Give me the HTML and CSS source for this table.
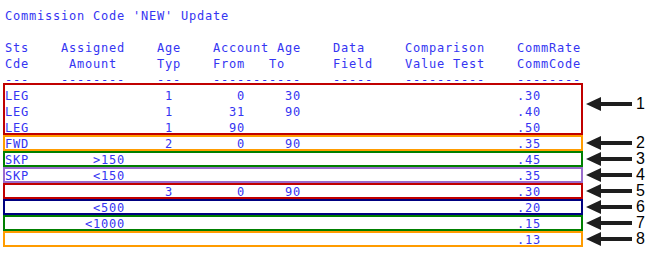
FILE: index.html
```html
<!DOCTYPE html>
<html>
<head>
<meta charset="utf-8">
<link rel="stylesheet" href="styles.css">
</head>
<body>
<div class="screen">
  <div class="line">Commission Code 'NEW' Update</div>
  <div class="line"></div>
  <div class="line cols hdr"><span class="sts">Sts</span><span class="amt">Assigned</span><span class="typ">Age</span><span class="acct">Account Age</span><span class="data">Data</span><span class="cmp">Comparison</span><span class="rate">CommRate</span></div>
  <div class="line cols hdr"><span class="sts">Cde</span><span class="amt">Amount</span><span class="typ">Typ</span><span class="from">From</span><span class="to-h">To</span><span class="data">Field</span><span class="cmp">Value Test</span><span class="rate">CommCode</span></div>
  <div class="line cols hdr"><span class="sts">---</span><span class="amt">--------</span><span class="typ">---</span><span class="acct">-----------</span><span class="data">-----</span><span class="cmp">----------</span><span class="rate">--------</span></div>

  <div class="group first">
    <div class="box red">
      <div class="line cols"><span class="sts">LEG</span><span class="typ">1</span><span class="from">0</span><span class="to">30</span><span class="rate">.30</span></div>
      <div class="line cols"><span class="sts">LEG</span><span class="typ">1</span><span class="from">31</span><span class="to">90</span><span class="rate">.40</span></div>
      <div class="line cols"><span class="sts">LEG</span><span class="typ">1</span><span class="from">90</span><span class="rate">.50</span></div>
    </div>
    <div class="note"><svg class="arrow" width="46" height="14" viewBox="0 0 46 14"><polygon points="0,7 15,0 15,14"/><rect x="14" y="5" width="32" height="4"/></svg><span class="num">1</span></div>
  </div>

  <div class="group">
    <div class="box orange">
      <div class="line cols"><span class="sts">FWD</span><span class="typ">2</span><span class="from">0</span><span class="to">90</span><span class="rate">.35</span></div>
    </div>
    <div class="note"><svg class="arrow" width="46" height="14" viewBox="0 0 46 14"><polygon points="0,7 15,0 15,14"/><rect x="14" y="5" width="32" height="4"/></svg><span class="num">2</span></div>
  </div>

  <div class="group">
    <div class="box green">
      <div class="line cols"><span class="sts">SKP</span><span class="amt">&gt;150</span><span class="rate">.45</span></div>
    </div>
    <div class="note"><svg class="arrow" width="46" height="14" viewBox="0 0 46 14"><polygon points="0,7 15,0 15,14"/><rect x="14" y="5" width="32" height="4"/></svg><span class="num">3</span></div>
  </div>

  <div class="group">
    <div class="box purple">
      <div class="line cols"><span class="sts">SKP</span><span class="amt">&lt;150</span><span class="rate">.35</span></div>
    </div>
    <div class="note"><svg class="arrow" width="46" height="14" viewBox="0 0 46 14"><polygon points="0,7 15,0 15,14"/><rect x="14" y="5" width="32" height="4"/></svg><span class="num">4</span></div>
  </div>

  <div class="group">
    <div class="box red">
      <div class="line cols"><span class="typ">3</span><span class="from">0</span><span class="to">90</span><span class="rate">.30</span></div>
    </div>
    <div class="note"><svg class="arrow" width="46" height="14" viewBox="0 0 46 14"><polygon points="0,7 15,0 15,14"/><rect x="14" y="5" width="32" height="4"/></svg><span class="num">5</span></div>
  </div>

  <div class="group">
    <div class="box navy">
      <div class="line cols"><span class="amt">&lt;500</span><span class="rate">.20</span></div>
    </div>
    <div class="note"><svg class="arrow" width="46" height="14" viewBox="0 0 46 14"><polygon points="0,7 15,0 15,14"/><rect x="14" y="5" width="32" height="4"/></svg><span class="num">6</span></div>
  </div>

  <div class="group">
    <div class="box green">
      <div class="line cols"><span class="amt">&lt;1000</span><span class="rate">.15</span></div>
    </div>
    <div class="note"><svg class="arrow" width="46" height="14" viewBox="0 0 46 14"><polygon points="0,7 15,0 15,14"/><rect x="14" y="5" width="32" height="4"/></svg><span class="num">7</span></div>
  </div>

  <div class="group">
    <div class="box orange">
      <div class="line cols"><span class="rate">.13</span></div>
    </div>
    <div class="note"><svg class="arrow" width="46" height="14" viewBox="0 0 46 14"><polygon points="0,7 15,0 15,14"/><rect x="14" y="5" width="32" height="4"/></svg><span class="num">8</span></div>
  </div>
</div>
</body>
</html>
```

FILE: styles.css
```css
html, body {
  margin: 0;
  padding: 0;
  background: #ffffff;
}

.screen {
  padding: 7px 0 0 5px;
  font-family: "DejaVu Sans Mono", monospace;
  font-size: 12px;
  letter-spacing: 0.78px;
  color: #3535f2;
}

.line {
  height: 16px;
  line-height: 16px;
  padding-top: 1px;
  box-sizing: border-box;
  white-space: pre;
}

.cols {
  display: grid;
  grid-template-columns: repeat(72, 8px);
  grid-template-rows: 15px;
}

.cols span { grid-row: 1; white-space: pre; }

.sts  { grid-column: 1 / span 3; }
.amt  { grid-column: 8 / span 8; text-align: right; }
.typ  { grid-column: 20 / span 3; text-align: center; }
.acct { grid-column: 27 / span 11; }
.from { grid-column: 27 / span 4; text-align: right; }
.to   { grid-column: 34 / span 4; text-align: right; }
.to-h { grid-column: 34 / span 2; }
.data { grid-column: 42 / span 5; }
.cmp  { grid-column: 51 / span 10; }
.rate { grid-column: 65 / span 8; }

.hdr .amt { text-align: center; }

.group {
  display: flex;
  align-items: center;
}

.group.first {
  margin-top: -4px;
}

.box {
  width: 580px;
  box-sizing: border-box;
  margin-left: -2px;
  padding-left: 2px;
}

.group.first .box {
  padding-top: 4px;
}

.red    { box-shadow: inset 0 0 0 2px #c00000; }
.orange { box-shadow: inset 0 0 0 2px #ff9c00; }
.green  { box-shadow: inset 0 0 0 2px #008000; }
.purple { box-shadow: inset 0 0 0 2px #9a6ccc; }
.navy   { box-shadow: inset 0 0 0 2px #000080; }

.note {
  display: flex;
  align-items: center;
  margin-left: 3px;
  height: 16px;
}

.group.first .note {
  margin-bottom: 10px;
}

.arrow {
  display: block;
  fill: #1e1e1e;
}

.num {
  margin-left: 4px;
  font-family: "Liberation Sans", Arial, sans-serif;
  font-size: 16px;
  line-height: 16px;
  letter-spacing: 0;
  color: #000000;
}
```
